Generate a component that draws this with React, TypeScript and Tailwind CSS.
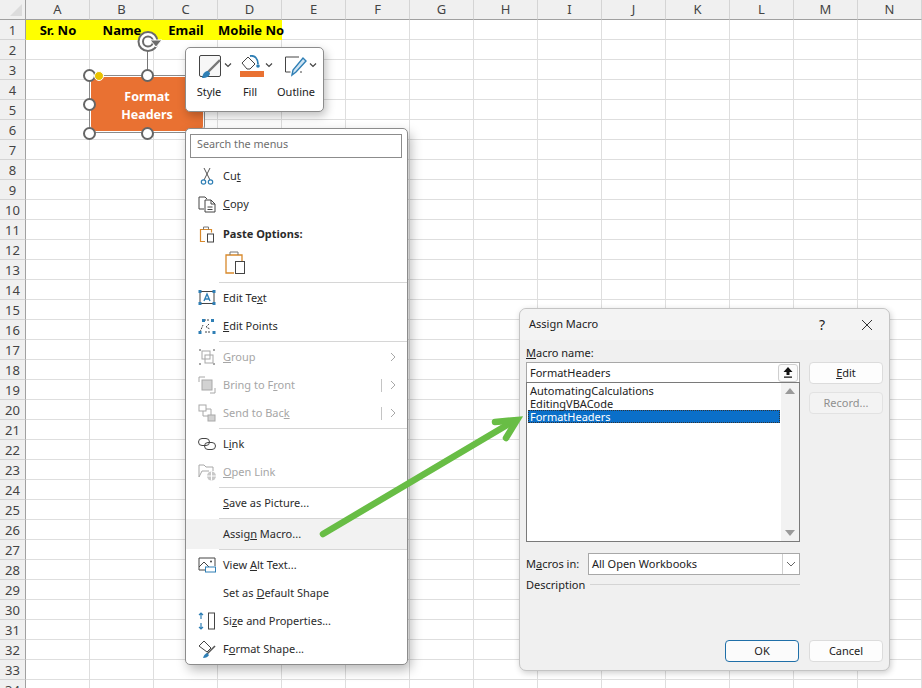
import type { ReactNode } from "react";

const columns = ["A", "B", "C", "D", "E", "F", "G", "H", "I", "J", "K", "L", "M", "N"];
const rows = Array.from({ length: 34 }, (_, i) => i + 1);
const headers = ["Sr. No", "Name", "Email", "Mobile No"];

const blue = "#2f7fb5";
const mute = "#a8a8a8";

function Sheet() {
  return (
    <div className="grid grid-cols-[26px_repeat(14,64px)] auto-rows-[20px] w-[922px] h-[688px] overflow-hidden bg-white">
      <div className="h-[20px] bg-[#f0f0f0] border-b border-r border-[#a0a0a0] flex items-end justify-end p-[3px]">
        <div className="w-0 h-0 border-l-[12px] border-l-transparent border-b-[12px] border-b-[#dcdcdc]" />
      </div>
      {columns.map((c) => (
        <div key={c} className="bg-[#f0f0f0] border-b border-r border-b-[#a0a0a0] border-r-[#d4d4d4] text-[13px] leading-[19px] text-center text-[#444]">
          {c}
        </div>
      ))}
      {rows.map((r) => (
        <Row key={r} n={r} />
      ))}
    </div>
  );
}

function Row({ n }: { n: number }) {
  return (
    <>
      <div className="bg-[#f0f0f0] border-r border-b border-r-[#a0a0a0] border-b-[#d4d4d4] text-[13px] leading-[21px] text-center text-[#444]">
        {n}
      </div>
      {columns.map((c, i) =>
        n === 1 && i < 4 ? (
          <div key={c} className="bg-[#ffff00] text-[13px] leading-[20px] font-bold text-center text-black whitespace-nowrap">
            {headers[i]}
          </div>
        ) : (
          <div key={c} className="border-r border-b border-[#dedede]" />
        ),
      )}
    </>
  );
}

function Handle({ className }: { className: string }) {
  return <div className={`absolute w-[13px] h-[13px] rounded-full bg-white border-2 border-[#666] ${className}`} />;
}

function Shape() {
  return (
    <>
      <div className="absolute left-[147px] top-[50px] w-px h-[26px] bg-[#777]" />
      <svg className="absolute left-[135px] top-[29px]" width="28" height="26" viewBox="0 0 28 26" fill="none">
        <circle cx="13" cy="12.5" r="9.5" fill="#fff" stroke="#6b6b6b" strokeWidth="2" />
        <circle cx="13" cy="12.5" r="5" fill="#fff" stroke="#6b6b6b" strokeWidth="2" />
        <path d="M15 11h12l-6 7z" fill="#6b6b6b" stroke="#fff" strokeWidth="1" />
      </svg>
      <div className="absolute left-[90px] top-[76px] w-[114px] h-[56px] rounded-[6px] bg-[#e97132] border border-white outline outline-[#8a8a8a] flex flex-col items-center justify-center pt-[4px] text-white font-bold text-[12.5px] leading-[18px]">
        <span>Format</span>
        <span>Headers</span>
      </div>
      <Handle className="left-[83px] top-[69px]" />
      <Handle className="left-[141px] top-[69px]" />
      <Handle className="left-[83px] top-[98px]" />
      <Handle className="left-[83px] top-[127px]" />
      <Handle className="left-[141px] top-[127px]" />
      <div className="absolute left-[94px] top-[71px] w-[10px] h-[10px] rounded-full bg-[#eac300] border border-white" />
    </>
  );
}

function Chevron() {
  return (
    <svg width="8" height="6" viewBox="0 0 8 6" fill="none" stroke="#444" strokeWidth="1.2" className="shrink-0 mb-[4px]">
      <path d="M1 1.5l3 3 3-3" />
    </svg>
  );
}

function ToolButton({ label, icon, className }: { label: string; icon: ReactNode; className: string }) {
  return (
    <div className={`flex flex-col ${className}`}>
      <div className="flex items-center h-[26px] gap-[1px]">
        {icon}
        <Chevron />
      </div>
      <span className="mt-[4px] text-[11px] leading-[16px] text-[#222] text-center whitespace-nowrap">{label}</span>
    </div>
  );
}

function Toolbar() {
  return (
    <div className="absolute left-[185px] top-[47px] w-[139px] h-[65px] bg-white rounded-[5px] border border-[#8c8c8c] shadow-[2px_4px_10px_rgba(0,0,0,0.25)] flex pl-[8px] pt-[6px]">
      <ToolButton
        label="Style"
        className="w-[30px]"
        icon={
          <svg width="24" height="24" viewBox="0 0 24 24" fill="none" className="shrink-0 ml-[5px]">
            <rect x="0.5" y="0.5" width="21" height="21" rx="1.5" fill="#f7f7f7" stroke="#444" />
            <path d="M9 17L21 5" stroke="#777" strokeWidth="2.4" />
            <path d="M3 23c1-5 3-7 6-7l2 2c0 3-3 5-8 5z" fill={blue} />
          </svg>
        }
      />
      <ToolButton
        label="Fill"
        className="w-[30px] ml-[11px]"
        icon={
          <svg width="24" height="24" viewBox="0 0 24 24" fill="none" className="shrink-0 ml-[5px]">
            <path d="M2 8l6-6 7 7-5 5H7z" fill="#fff" stroke="#444" />
            <path d="M10 1c5-1 8 3 8 8" stroke={blue} strokeWidth="1.8" />
            <circle cx="18" cy="11" r="1.8" fill={blue} />
            <rect x="0" y="16" width="24" height="6" fill="#e97132" />
          </svg>
        }
      />
      <ToolButton
        label="Outline"
        className="w-[38px] ml-[12px]"
        icon={
          <svg width="23" height="24" viewBox="0 0 23 24" fill="none" className="shrink-0 ml-[8px]">
            <path d="M14 2H0.5v15h5M15 17h2" stroke="#444" />
            <path d="M7 20l1-5L18 3l3 3-10 11z" fill="#cfe4f3" stroke={blue} strokeWidth="1.4" />
          </svg>
        }
      />
    </div>
  );
}

function Ic({ children }: { children: ReactNode }) {
  return (
    <svg width="20" height="20" viewBox="0 0 20 20" fill="none">
      {children}
    </svg>
  );
}

const icons: Record<string, ReactNode> = {
  cut: (
    <Ic>
      <path d="M7 2l6 12M13 2L7 14" stroke="#555" />
      <circle cx="6.5" cy="16" r="2.2" stroke={blue} strokeWidth="1.2" />
      <circle cx="13.5" cy="16" r="2.2" stroke={blue} strokeWidth="1.2" />
    </Ic>
  ),
  copy: (
    <Ic>
      <path d="M7 15H2V3h6l2 2" stroke="#444" />
      <path d="M8 6h6l4 4v8H8zM14 6v4h4M10.5 13h5M10.5 15.5h5" stroke="#444" />
    </Ic>
  ),
  paste: (
    <Ic>
      <path d="M8 17.5H3.5V5.5h11v3" stroke="#d8892b" strokeWidth="1.2" />
      <path d="M6.5 5.5V3h5v2.5" stroke="#777" />
      <rect x="10.5" y="10" width="6" height="8" fill="#fff" stroke="#444" />
    </Ic>
  ),
  text: (
    <Ic>
      <rect x="3" y="3.5" width="14" height="12" stroke="#444" />
      <path d="M7 13l3-7 3 7M8 11h4" stroke={blue} strokeWidth="1.4" />
      <path d="M1.5 2h3v3h-3zM15.5 2h3v3h-3zM1.5 14h3v3h-3zM15.5 14h3v3h-3z" fill={blue} />
    </Ic>
  ),
  points: (
    <Ic>
      <path d="M3 16l3-7M7 4h6M13 16H7M12 8l-3 3 4 2" stroke="#444" strokeDasharray="2 1" />
      <path d="M5 3h3v3H5zM14 3h3v3h-3zM1.5 15h3v3h-3zM15.5 15h3v3h-3z" fill={blue} />
    </Ic>
  ),
  group: (
    <Ic>
      <rect x="5" y="4" width="8" height="8" stroke={mute} />
      <rect x="8" y="8" width="8" height="8" stroke={mute} />
      <path d="M2 2h2v2H2zM16 2h2v2h-2zM2 16h2v2H2zM16 16h2v2h-2z" fill={mute} />
    </Ic>
  ),
  front: (
    <Ic>
      <path d="M2 7V2h6M13 18h5v-5" stroke={mute} />
      <rect x="5" y="5" width="10" height="10" fill="#d2d2d2" stroke={mute} />
    </Ic>
  ),
  back: (
    <Ic>
      <rect x="2" y="2" width="7" height="6" stroke={mute} />
      <rect x="11" y="12" width="7" height="6" fill="#d2d2d2" stroke={mute} />
      <path d="M6 8v5h5M9 6h5v6" stroke={mute} />
    </Ic>
  ),
  link: (
    <Ic>
      <rect x="1.5" y="4.5" width="11" height="7" rx="3.5" stroke="#444" />
      <rect x="7.5" y="8.5" width="11" height="7" rx="3.5" stroke="#444" />
    </Ic>
  ),
  open: (
    <Ic>
      <path d="M2 15V3h5l2 2h7v4M2 15l3-6h7" stroke={mute} />
      <circle cx="14.5" cy="14" r="4.5" fill="#c8c8c8" />
      <path d="M10 14h9M14.5 9.5v9" stroke="#fff" />
    </Ic>
  ),
  alt: (
    <Ic>
      <path d="M8 15H2V3h16v8" stroke="#444" />
      <path d="M2 12l5-5 5 5" stroke="#444" />
      <circle cx="14" cy="6.5" r="1" fill="#444" />
      <rect x="8.5" y="12" width="10" height="5" fill="#fff" stroke={blue} />
    </Ic>
  ),
  size: (
    <Ic>
      <path d="M4 2v6M2 4l2-2 2 2M4 12v6M2 16l2 2 2-2" stroke={blue} strokeWidth="1.2" />
      <rect x="11.5" y="2" width="6" height="16" stroke="#444" />
    </Ic>
  ),
  format: (
    <Ic>
      <path d="M2 7l5-5 7 7-4 4z" stroke="#444" />
      <path d="M10 15L18 7" stroke="#555" strokeWidth="1.6" />
      <path d="M6 19c1-3 2-4 4-5l2 2c-1 2-3 3-6 3z" fill={blue} />
    </Ic>
  ),
};

function MenuItem({ icon, off, more, bar, children }: { icon?: string; off?: boolean; more?: boolean; bar?: boolean; children: ReactNode }) {
  return (
    <div className={`flex items-center pl-[11px] pr-[8px] h-[28px] ${off ? "text-[#a6a6a6]" : "text-[#2b2b2b]"}`}>
      <div className="w-[20px] h-[20px] shrink-0">{icon ? icons[icon] : null}</div>
      <span className="ml-[6px] flex-1 text-[11px] leading-[16px] whitespace-nowrap">{children}</span>
      {bar && <div className="w-px h-[13px] bg-[#c4c4c4] mr-[8px]" />}
      {more && (
        <svg width="6" height="10" viewBox="0 0 6 10" fill="none" stroke="#a8a8a8" className="mr-[3px]">
          <path d="M1 1l4 4-4 4" />
        </svg>
      )}
    </div>
  );
}

function Sep() {
  return <div className="ml-[33px] h-px my-[1px] bg-[#d6d6d6]" />;
}

function ContextMenu() {
  return (
    <div className="absolute left-[185px] top-[128px] w-[223px] h-[537px] bg-white rounded-[5px] border border-[#8c8c8c] shadow-[3px_5px_12px_rgba(0,0,0,0.28)] overflow-hidden pt-[5px]">
      <div className="ml-[4px] mr-[5px] h-[24px] border border-[#8c8c8c] pl-[6px] text-[10.8px] leading-[17px] text-[#6e6e6e]">
        Search the menus
      </div>
      <div className="mt-[4px]">
        <MenuItem icon="cut">
          Cu<u>t</u>
        </MenuItem>
        <MenuItem icon="copy">
          <u>C</u>opy
        </MenuItem>
        <div className="mt-[2px]">
          <MenuItem icon="paste">
            <b>Paste Options:</b>
          </MenuItem>
        </div>
        <div className="h-[33px] pl-[39px] pt-[3px]">
          <svg width="22" height="24" viewBox="0 0 22 24" fill="none">
            <path d="M9 22H1V4h16v6" stroke="#d8892b" strokeWidth="1.3" />
            <path d="M5 4V1h8v3" stroke="#777" />
            <rect x="10.5" y="10.5" width="9" height="12" fill="#fff" stroke="#444" />
          </svg>
        </div>
        <Sep />
        <MenuItem icon="text">
          Edit Te<u>x</u>t
        </MenuItem>
        <MenuItem icon="points">
          <u>E</u>dit Points
        </MenuItem>
        <Sep />
        <MenuItem icon="group" off more>
          <u>G</u>roup
        </MenuItem>
        <MenuItem icon="front" off more bar>
          Bring to F<u>r</u>ont
        </MenuItem>
        <MenuItem icon="back" off more bar>
          Send to Bac<u>k</u>
        </MenuItem>
        <Sep />
        <MenuItem icon="link">
          L<u>i</u>nk
        </MenuItem>
        <MenuItem icon="open" off>
          <u>O</u>pen Link
        </MenuItem>
        <Sep />
        <MenuItem>
          <u>S</u>ave as Picture...
        </MenuItem>
        <div className="ml-[33px] h-px mt-[1px] bg-[#d6d6d6]" />
        <div className="h-[30px] flex flex-col justify-center bg-[#f2f2f2]">
          <MenuItem>
            Assig<u>n</u> Macro...
          </MenuItem>
        </div>
        <div className="ml-[33px] h-px mb-[1px] bg-[#d6d6d6]" />
        <MenuItem icon="alt">
          View <u>A</u>lt Text...
        </MenuItem>
        <MenuItem>
          Set as <u>D</u>efault Shape
        </MenuItem>
        <MenuItem icon="size">
          Si<u>z</u>e and Properties...
        </MenuItem>
        <MenuItem icon="format">
          F<u>o</u>rmat Shape...
        </MenuItem>
      </div>
    </div>
  );
}

function DialogButton({ off, main, children }: { off?: boolean; main?: boolean; children: ReactNode }) {
  return (
    <div className={`w-[74px] h-[22px] rounded-[4px] text-center text-[11px] leading-[20px] border ${main ? "border-[#1f6fa8] border-[1.5px] bg-[#fbfbfb] text-[#222]" : off ? "border-[#e2e2e2] bg-[#f3f3f3] text-[#8f8f8f]" : "border-[#dcdcdc] bg-[#fdfdfd] text-[#222]"}`}>
      {children}
    </div>
  );
}

function Dialog() {
  return (
    <div className="absolute left-[519px] top-[308px] w-[371px] h-[363px] rounded-[7px] bg-[#f0f0f0] border border-[#c4c4c4] shadow-[1px_2px_6px_rgba(0,0,0,0.2)] text-[#222] text-[11px] leading-[13px] flex flex-col">
      <div className="h-[31px] shrink-0 flex items-center pl-[9px] bg-[#f3f3f3] rounded-t-[7px] text-[11px]">
        <span className="flex-1 mb-[2px]">Assign Macro</span>
        <span className="text-[14px] mr-[36px]">?</span>
        <svg width="12" height="12" viewBox="0 0 12 12" fill="none" stroke="#333" className="mr-[16px]">
          <path d="M1 1l10 10M11 1L1 11" />
        </svg>
      </div>
      <div className="flex-1 flex flex-col pl-[6px] pr-[6px] pb-[8px]">
        <div className="flex gap-[9px] mt-[5px]">
          <div className="w-[274px]">
            <div className="h-[17px] leading-[16px]">
              <u>M</u>acro name:
            </div>
            <div className="h-[20px] bg-white border border-[#a8a8a8] border-b-0 flex items-center pl-[3px] relative">
              <span className="flex-1">FormatHeaders</span>
              <div className="w-[20px] h-[18px] bg-[#fbfbfb] border border-[#cfcfcf] rounded-[3px] flex items-center justify-center mr-[1px]">
                <svg width="10" height="11" viewBox="0 0 10 11" fill="#111">
                  <path d="M5 0l4.5 5H6.5v3h-3V5H.5zM1 9.5h8v1.2H1z" />
                </svg>
              </div>
            </div>
            <div className="h-[160px] bg-white border border-[#7a7a7a] flex">
              <div className="flex-1 pl-[1px] pt-[1px]">
                <div className="pl-[2px]">AutomatingCalculations</div>
                <div className="pl-[2px]">EditingVBACode</div>
                <div className="pl-[2px] bg-[#0a6fc9] text-white outline-1 outline-dotted outline-offset-[-1px] outline-[#333]">FormatHeaders</div>
              </div>
              <div className="w-[18px] ml-[1px] bg-[#f2f2f2] flex flex-col justify-between items-center py-[5px]">
                <div className="w-0 h-0 border-x-[5px] border-x-transparent border-b-[6px] border-b-[#9a9a9a]" />
                <div className="w-0 h-0 border-x-[5px] border-x-transparent border-t-[6px] border-t-[#9a9a9a]" />
              </div>
            </div>
          </div>
          <div className="pt-[17px] flex flex-col gap-[8px]">
            <DialogButton>
              <u>E</u>dit
            </DialogButton>
            <DialogButton off>Record...</DialogButton>
          </div>
        </div>
        <div className="w-[274px] flex items-center mt-[11px]">
          <span className="w-[62px] mb-[2px]">
            M<u>a</u>cros in:
          </span>
          <div className="flex-1 h-[22px] bg-white border border-[#a8a8a8] flex items-center pl-[3px]">
            <span className="flex-1 mb-[2px]">All Open Workbooks</span>
            <div className="w-[17px] h-full border-l border-[#cfcfcf] flex items-center justify-center">
              <svg width="10" height="6" viewBox="0 0 10 6" fill="none" stroke="#666">
                <path d="M1 1l4 4 4-4" />
              </svg>
            </div>
          </div>
        </div>
        <div className="w-[274px] flex items-center mt-[1px] h-[16px]">
          <span>Description</span>
          <div className="flex-1 h-px bg-[#d4d4d4] ml-[5px]" />
        </div>
        <div className="mt-auto flex justify-end gap-[10px]">
          <DialogButton main>OK</DialogButton>
          <DialogButton>Cancel</DialogButton>
        </div>
      </div>
    </div>
  );
}

function GreenArrow() {
  return (
    <svg className="absolute left-0 top-0 pointer-events-none" width="922" height="688" fill="none">
      <path d="M323 534L512 422" stroke="#68bd45" strokeWidth="6.5" strokeLinecap="round" />
      <path d="M495 422L517 420L506 438" stroke="#68bd45" strokeWidth="6.5" strokeLinecap="round" strokeLinejoin="miter" />
    </svg>
  );
}

export default function App() {
  return (
    <div className="relative w-[922px] h-[688px] overflow-hidden font-['Noto_Sans',sans-serif]">
      <Sheet />
      <Shape />
      <Toolbar />
      <ContextMenu />
      <Dialog />
      <GreenArrow />
    </div>
  );
}
